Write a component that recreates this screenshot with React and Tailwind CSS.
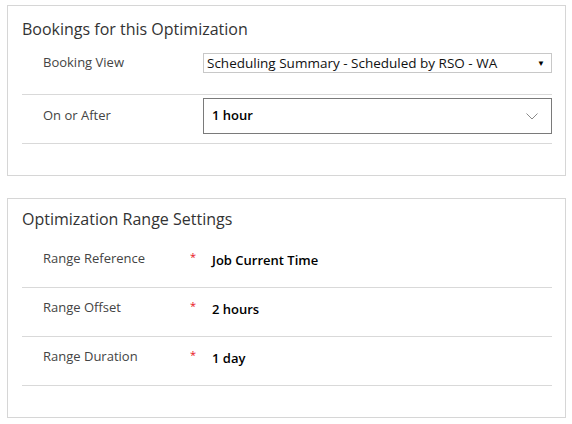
import React from "react";

const font = { fontFamily: '"Open Sans", "Noto Sans", sans-serif' };

const RangeRow = ({ label, value }) => (
    <div className="flex items-start h-[49px] border-b border-[#d9d9d9]">
        <div className="w-[168px] pl-[21px] pt-[10px] text-[13px] text-[#444]">{label}</div>
        <div className="w-[22px] pt-[10px] text-[11px] text-[#e81123]">*</div>
        <div className="pt-[12px] text-[13px] font-semibold text-black">{value}</div>
    </div>
);

const App = () => {
    return (
        <div className="w-[572px] h-[424px] bg-white pt-[5px] pl-[7px]" style={font}>
            <div className="w-[559px] h-[171px] border border-[#d6d6d6] pl-[14px] pr-[13px]">
                <p className="pt-[11px] h-[40px] text-[16px] text-[#333]">Bookings for this Optimization</p>
                <div className="flex items-start h-[49px] border-b border-[#d9d9d9]">
                    <div className="w-[181px] pl-[21px] pt-[7px] text-[13px] text-[#444]">Booking View</div>
                    <div className="mt-[7px] flex-1 h-[20px] border border-[#c8c8c8] flex items-center justify-between pl-[3px] pr-[6px]">
                        <span className="text-[13.5px] text-[#111]">Scheduling Summary - Scheduled by RSO - WA</span>
                        <span className="text-[8px] text-black">▼</span>
                    </div>
                </div>
                <div className="flex items-start h-[49px] border-b border-[#d9d9d9]">
                    <div className="w-[181px] pl-[21px] pt-[11px] text-[13px] text-[#444]">On or After</div>
                    <div className="mt-[3px] flex-1 h-[36px] border border-[#7a7a7a] flex items-center justify-between pl-[8px] pr-[13px]">
                        <span className="text-[13px] font-semibold text-black">1 hour</span>
                        <svg width="12" height="7" viewBox="0 0 12 7" fill="none">
                            <path d="M0.5 0.5 L6 6 L11.5 0.5" stroke="#8a8a8a" strokeWidth="1" />
                        </svg>
                    </div>
                </div>
            </div>
            <div className="mt-[22px] w-[559px] h-[220px] border border-[#d6d6d6] pl-[14px] pr-[13px]">
                <p className="pt-[8px] h-[40px] text-[16px] text-[#333]">Optimization Range Settings</p>
                <RangeRow label="Range Reference" value="Job Current Time" />
                <RangeRow label="Range Offset" value="2 hours" />
                <RangeRow label="Range Duration" value="1 day" />
            </div>
        </div>
    );
};

export default App;
